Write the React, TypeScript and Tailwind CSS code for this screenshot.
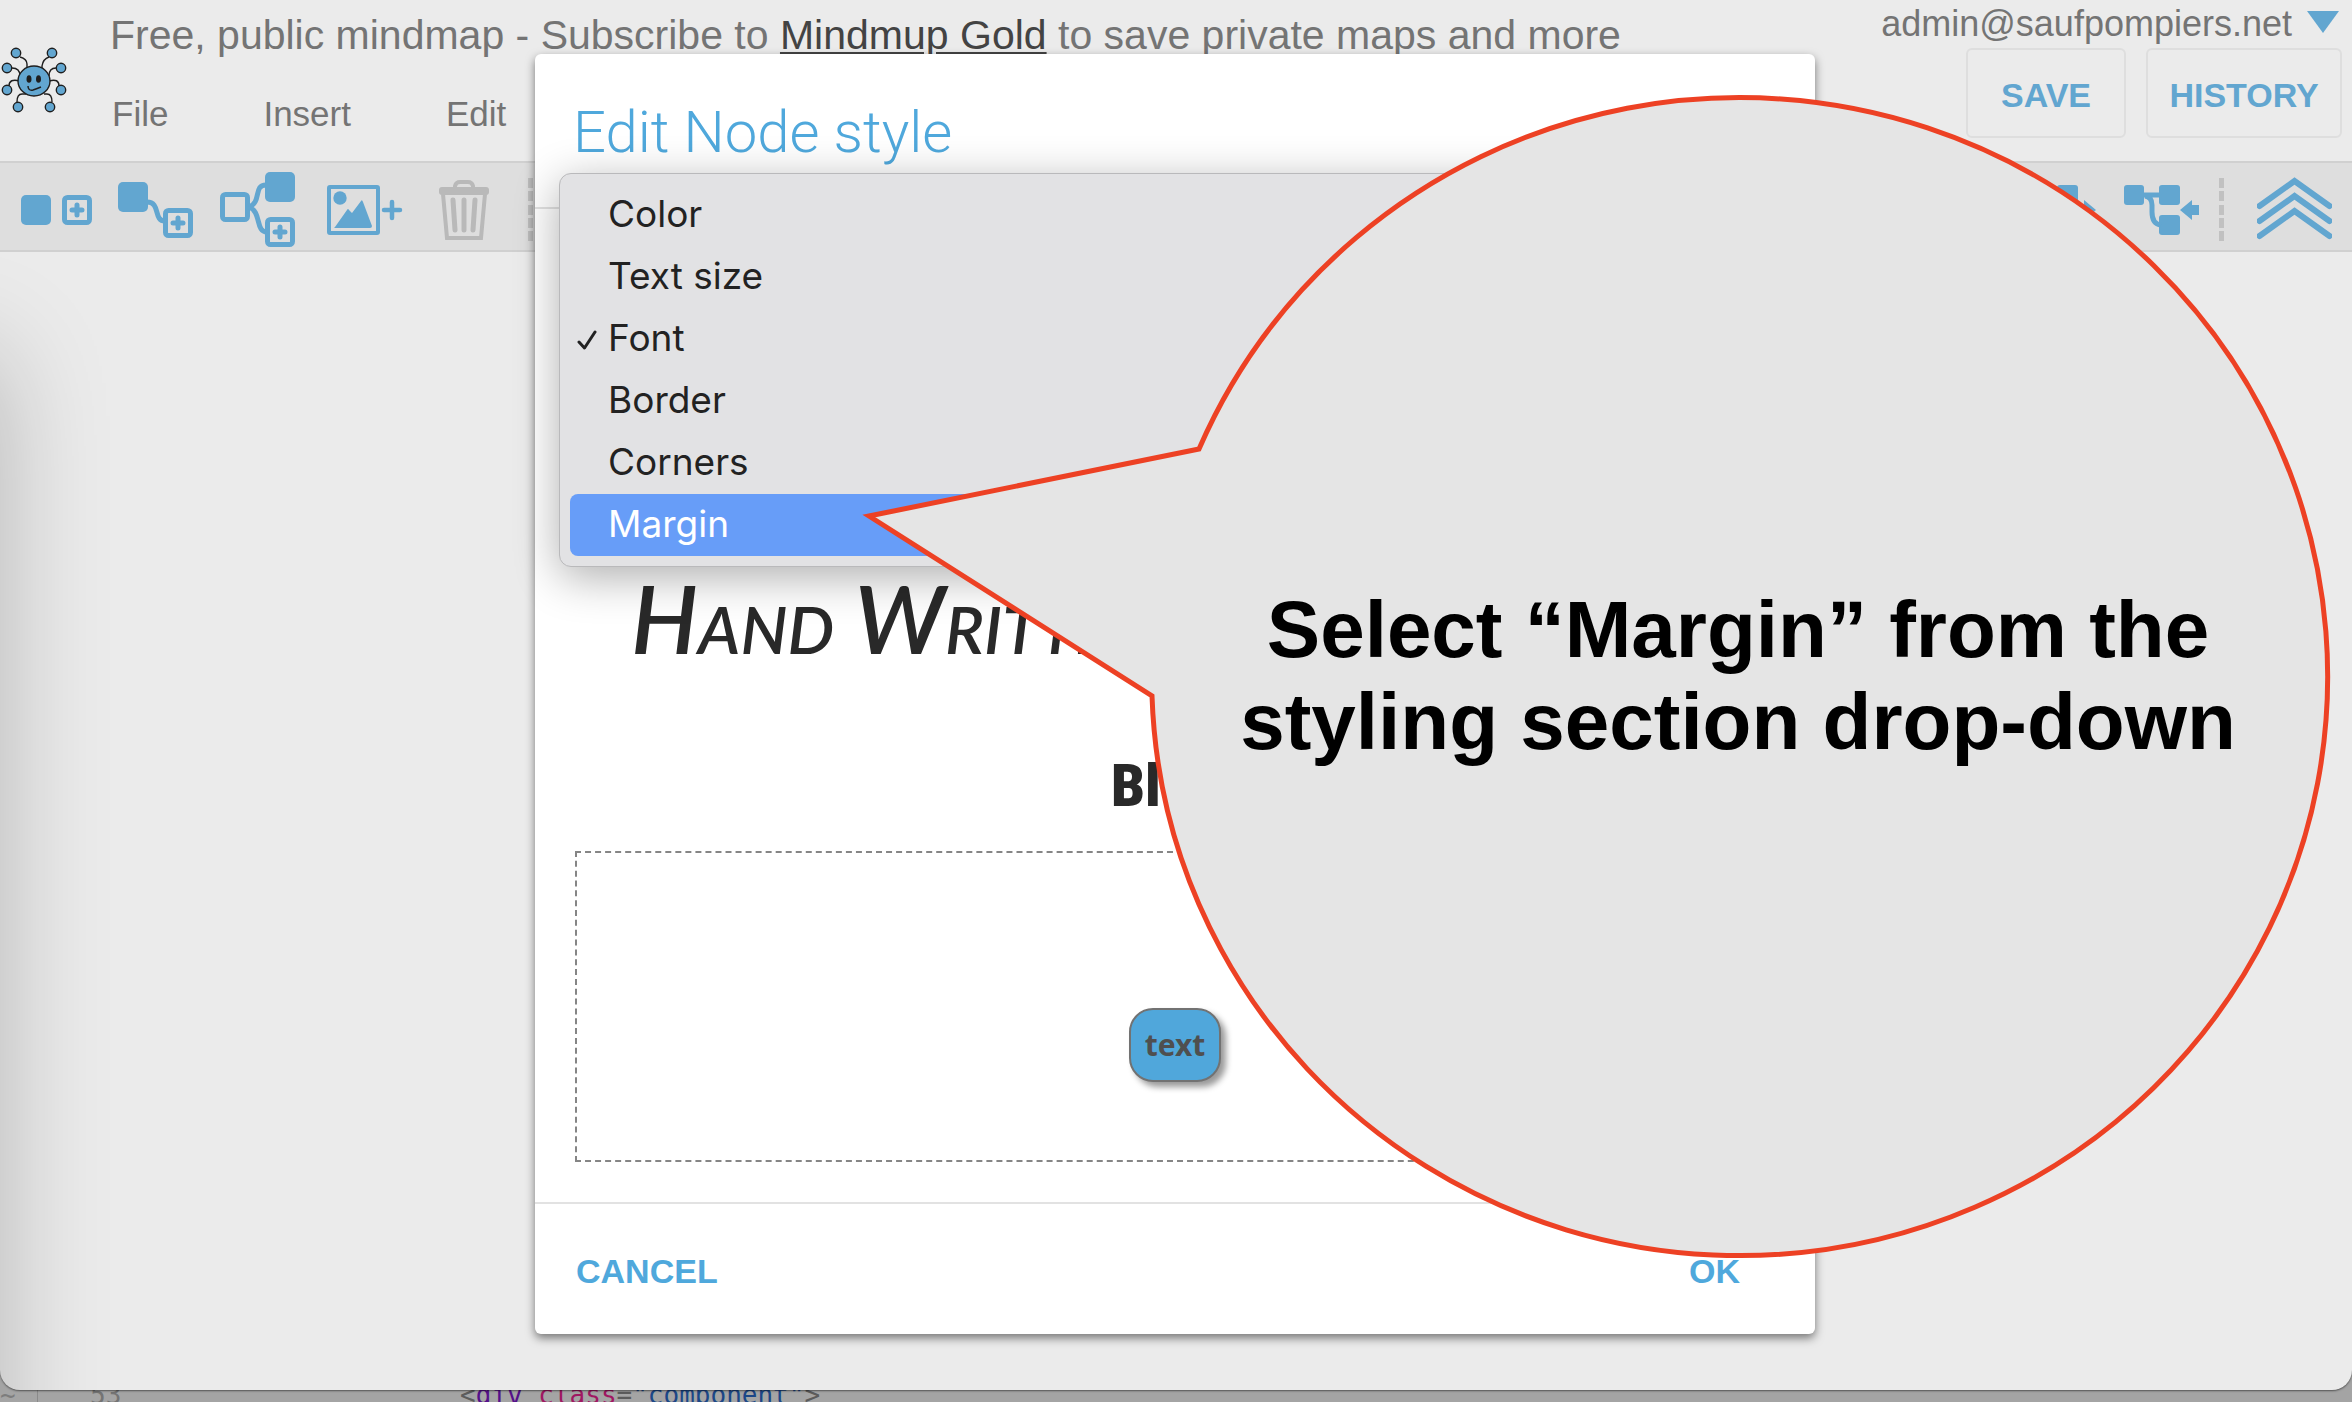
import type { ReactNode } from "react";

const BLUE = "#62a6d0";

function Logo() {
  const arms = [
    [15, 8, "M26 27 V19 Q26 14 19 12"],
    [51, 8, "M41 27 V21 Q42 14 48 12"],
    [6, 23, "M19 31 Q19 23 11 23"],
    [60, 23, "M48 31 Q48 23 55 23"],
    [6, 45, "M19 36 Q8 33 8 41"],
    [60, 45, "M48 36 Q58 33 58 41"],
    [17, 62, "M25 49 H21 Q16 49 16 57"],
    [49, 62, "M43 49 H46 Q51 49 51 57"],
  ] as const;
  return (
    <svg viewBox="0 0 66 68" className="w-[66px] h-[68px] shrink-0" role="img" aria-label="MindMup">
      {arms.map(([x, y, d]) => (
        <g key={d} stroke="#1f1f1f" strokeWidth="1.4">
          <path d={d} fill="none" />
          <circle cx={x} cy={y} r="4.7" fill={BLUE} />
        </g>
      ))}
      <ellipse cx="33" cy="36" rx="16" ry="15" fill={BLUE} stroke="#1f1f1f" strokeWidth="1.4" />
      <ellipse cx="28" cy="34" rx="2.5" ry="3.8" fill="#1f1f1f" />
      <ellipse cx="37.500" cy="34" rx="2.5" ry="3.8" fill="#1f1f1f" />
      <path d="M27 41 Q27 46 32 45 Q35 44 40 42" fill="none" stroke="#1f1f1f" strokeWidth="1.5" />
    </svg>
  );
}

function PlusBox({ x, y }: { x: number; y: number }) {
  return (
    <g>
      <rect x={x + 2.5} y={y + 2.5} width="25" height="25" rx="3" fill="none" stroke={BLUE} strokeWidth="5" />
      <path d={`M${x + 15} ${y + 10} v10 M${x + 10} ${y + 15} h10`} stroke={BLUE} strokeWidth="5" strokeLinecap="round" />
    </g>
  );
}

function Tool({ label, children }: { label: string; children: ReactNode }) {
  return (
    <button type="button" aria-label={label} className="block shrink-0">
      {children}
    </button>
  );
}

function Divider() {
  return (
    <svg viewBox="0 0 5 64" className="w-[5px] h-16 shrink-0" aria-hidden="true">
      {[0, 13, 27, 40, 53].map((y) => (
        <rect key={y} x="0" y={y} width="5" height="10" fill="#c1c1c1" />
      ))}
    </svg>
  );
}

function TreeIcon({ arrow }: { arrow: string }) {
  return (
    <svg viewBox="0 0 76 50" className="w-[76px] h-[50px]">
      <g fill={BLUE}>
        <rect x="0" y="0" width="20" height="20" rx="3" />
        <rect x="35" y="0" width="21" height="20" rx="3" />
        <rect x="35" y="30" width="21" height="20" rx="3" />
        <path d={arrow} />
      </g>
      <path d="M20 10 H36 M21 11 Q28 12 28 20 V27 Q28 39 37 40" fill="none" stroke={BLUE} strokeWidth="5" />
    </svg>
  );
}

function Header() {
  return (
    <header className="flex justify-between pl-px pr-[10px] h-[161px] text-[#747474]">
      <div className="flex">
        <div className="pt-[45px]">
          <Logo />
        </div>
        <div className="pl-[43px] pt-[11px]">
          <p className="text-[41px] leading-[48px] whitespace-nowrap">
            Free, public mindmap - Subscribe to{" "}
            <a href="#gold" className="text-[#434343] underline">
              Mindmup Gold
            </a>{" "}
            to save private maps and more
          </p>
          <nav className="mt-[35px] flex gap-[95px] pl-[2px] text-[35px] leading-[40px]">
            <button type="button">File</button>
            <button type="button">Insert</button>
            <button type="button">Edit</button>
          </nav>
        </div>
      </div>
      <div className="flex flex-col items-end">
        <button type="button" className="flex items-center gap-[15px] pr-[3px] pt-1 text-[36px] leading-[40px]">
          admin@saufpompiers.net
          <svg viewBox="0 0 32 22" className="mb-1 w-8 h-[22px]" aria-hidden="true">
            <path d="M0 0 H32 L16 22 Z" fill={BLUE} />
          </svg>
        </button>
        <div className="mt-1 flex gap-5 text-[34px] leading-[40px] font-bold text-[#62a6d0]">
          <button type="button" className="h-[90px] w-40 rounded-md border-2 border-[#dedede] pt-1">
            SAVE
          </button>
          <button type="button" className="h-[90px] w-[196px] rounded-md border-2 border-[#dedede] pt-1">
            HISTORY
          </button>
        </div>
      </div>
    </header>
  );
}

function Toolbar() {
  return (
    <div className="flex items-center justify-between border-y-2 border-[#d0d0d0] bg-[#dedede] h-[91px] pt-[7px] pl-[21px] pr-5">
      <div className="flex items-center">
        <Tool label="Add sibling">
          <svg viewBox="0 0 71 80" className="w-[71px] h-20">
            <rect x="0" y="25" width="30" height="30" rx="5" fill={BLUE} />
            <PlusBox x={41} y={25} />
          </svg>
        </Tool>
        <div className="pl-[26px]">
          <Tool label="Add child">
            <svg viewBox="0 0 75 80" className="w-[75px] h-20">
              <path d="M29 32 C43 32 35 51 47 51" fill="none" stroke={BLUE} strokeWidth="5" />
              <rect x="0" y="12" width="30" height="30" rx="5" fill={BLUE} />
              <PlusBox x={45} y={38} />
            </svg>
          </Tool>
        </div>
        <div className="pl-[27px]">
          <Tool label="Insert parent">
            <svg viewBox="0 0 76 80" className="w-[76px] h-20">
              <rect x="2.5" y="24.5" width="25" height="25" rx="3" fill="none" stroke={BLUE} strokeWidth="5" />
              <path d="M29 37 C42 32 33 15 46 15 M29 37 C42 42 35 62 47 62" fill="none" stroke={BLUE} strokeWidth="5" />
              <rect x="45" y="2" width="30" height="30" rx="5" fill={BLUE} />
              <PlusBox x={45} y={47} />
            </svg>
          </Tool>
        </div>
        <div className="pl-[31px]">
          <Tool label="Add image">
            <svg viewBox="0 0 76 80" className="w-[76px] h-20">
              <rect x="2" y="17" width="49" height="46" rx="1" fill="none" stroke={BLUE} strokeWidth="4" />
              <circle cx="13" cy="28" r="6.7" fill={BLUE} />
              <path d="M8 57 L20 40 Q21 38 22 40 L25 43 L34 31 Q35 29 36 32 L45 56 Q45 58 43 58 H9 Q6 58 8 57 Z" fill={BLUE} />
              <path d="M65 32 v16 M57 40 h16" stroke={BLUE} strokeWidth="4.5" strokeLinecap="round" />
            </svg>
          </Tool>
        </div>
        <div className="pl-9">
          <Tool label="Delete">
            <svg viewBox="0 0 50 80" className="w-[50px] h-20">
              <g fill="none" stroke="#b9b9b9" strokeWidth="4">
                <path d="M16 18 V16 Q17 12 21 12 H29 Q33 12 34 16 V18" />
                <path d="M4 24 L8 68 H42 L46 24" />
                <path d="M14 30 L16 60 M25 30 V60 M36 30 L34 60" strokeWidth="5" strokeLinecap="round" />
              </g>
              <rect x="0" y="17" width="50" height="8" rx="3" fill="#b9b9b9" />
            </svg>
          </Tool>
        </div>
        <div className="pl-[39px]">
          <Divider />
        </div>
      </div>
      <div className="flex items-center">
        <Tool label="Move right">
          <TreeIcon arrow="M56 20 H62 V15 L74 25 L62 35 V30 H56 Z" />
        </Tool>
        <div className="pl-[26px]">
          <Tool label="Move left">
            <TreeIcon arrow="M56 25 L68 15 V20 H75 V30 H68 V35 Z" />
          </Tool>
        </div>
        <div className="pl-[19px]">
          <Divider />
        </div>
        <div className="pl-[33px]">
          <Tool label="Collapse toolbar">
            <svg viewBox="0 0 75 66" className="w-[75px] h-[66px]">
              <path
                d="M2.500 29 L37.500 4 L72.500 29 M2.500 44 L37.500 19 L72.500 44 M2.500 59 L37.500 34 L72.500 59"
                fill="none"
                stroke={BLUE}
                strokeWidth="6"
                strokeLinecap="round"
              />
            </svg>
          </Tool>
        </div>
      </div>
    </div>
  );
}

const sections = ["Color", "Text size", "Font", "Border", "Corners", "Margin"];

function SectionMenu() {
  return (
    <div
      role="listbox"
      aria-label="Styling section"
      className="absolute left-6 right-6 top-[119px] rounded-xl border border-[#b9b9bb] bg-[#e2e2e4] px-[10px] py-[10px] shadow-[0_10px_45px_rgba(0,0,0,0.32)] font-[Inter,sans-serif] text-[37px] leading-[60px] text-[#222]"
    >
      {sections.map((name) => (
        <button
          key={name}
          type="button"
          role="option"
          aria-selected={name === "Font"}
          className={
            name === "Margin"
              ? "flex w-full items-center rounded-lg bg-[#679df8] pb-0.5 text-white"
              : "flex w-full items-center pb-0.5"
          }
        >
          <span className="flex w-[38px] shrink-0 justify-center pr-1">
            {name === "Font" && (
              <svg viewBox="0 0 20 20" className="mt-1 w-5 h-5" aria-hidden="true">
                <path d="M2 12 L7.500 18 L18 2" fill="none" stroke="#222" strokeWidth="3" strokeLinecap="round" strokeLinejoin="round" />
              </svg>
            )}
          </span>
          {name}
        </button>
      ))}
    </div>
  );
}

function StyleDialog() {
  return (
    <section
      role="dialog"
      aria-labelledby="dialog-title"
      className="relative flex h-full w-full max-w-[1280px] flex-col rounded-md bg-white shadow-[0_4px_10px_rgba(0,0,0,0.5)]"
    >
      <h1
        id="dialog-title"
        className="h-[155px] border-b-2 border-[#e2e2e2] px-[38px] pt-[42px] font-[Roboto,sans-serif] text-[58px] leading-[72px] font-light text-[#4fa8dc]"
      >
        Edit Node style
      </h1>
      <div className="flex grow flex-col justify-end px-10 pb-10 text-[#292929]">
        <p className="pl-[56px] font-[Lato,sans-serif] text-[94px] leading-[100px] font-semibold italic [font-variant-caps:small-caps]">
          Hand Written
        </p>
        <p className="mt-[78px] pl-[536px] font-['Roboto_Condensed',Roboto,sans-serif] text-[60px] leading-[80px] font-black">
          Block
        </p>
        <div className="mt-[25px] flex h-[311px] items-center justify-center border-2 border-dashed border-[#858585]">
          <div className="mt-[76px] flex h-[74px] w-[92px] items-center justify-center rounded-3xl border-2 border-[#727272] bg-[#50a7db] font-['Noto_Sans','Open_Sans',sans-serif] text-[30px] font-bold text-[#4f4f4f] shadow-[5px_5px_6px_rgba(0,0,0,0.4)]">
            text
          </div>
        </div>
      </div>
      <footer className="flex h-[132px] items-center justify-between border-t-2 border-[#e2e2e2] pt-1 pl-[41px] pr-[75px] text-[34px] leading-[40px] font-bold text-[#4fa8dc]">
        <button type="button">CANCEL</button>
        <button type="button">OK</button>
      </footer>
      <SectionMenu />
    </section>
  );
}

function Callout() {
  return (
    <aside className="absolute right-5 top-[94px] h-[1166px] w-[1470px]">
      <svg viewBox="862 94 1470 1166" className="absolute inset-0 h-full w-full" aria-hidden="true">
        <path
          d="M869 516 L1199 449 A588 579 0 1 1 1152 696 Z"
          fill="#e5e5e5"
          stroke="#ed4124"
          strokeWidth="5"
        />
      </svg>
      <p className="relative ml-[282px] flex h-[1166px] items-center justify-center pb-0.5 text-center text-[80px] leading-[92px] font-bold text-black">
        <span>
          Select “Margin” from the
          <br />
          styling section drop-down
        </span>
      </p>
    </aside>
  );
}

function EditorStrip() {
  return (
    <div className="flex h-3 items-end overflow-hidden font-['DejaVu_Sans_Mono',monospace] text-[26px] leading-[14px] text-[#5c5c5c] whitespace-pre">
      <span className="w-[38px] shrink-0 border-r border-[#8a8a8a] text-[#7d7d7d]">~</span>
      <span className="w-[422px] shrink-0 pl-[52px] text-[#747474]">53</span>
      <code className="font-['DejaVu_Sans_Mono',monospace]">
        &lt;<span className="text-[#55118a]">div</span> <span className="text-[#a01762]">class</span>=
        <span className="text-[#1c4787]">"component"</span>&gt;
      </code>
    </div>
  );
}

export default function App() {
  return (
    <div className="relative flex h-screen min-h-[1200px] flex-col overflow-hidden bg-[#a4a4a4] font-['Liberation_Sans',Arial,sans-serif]">
      <main className="relative grow overflow-hidden rounded-b-[20px] bg-[#ebebeb] shadow-[0_1px_2px_rgba(0,0,0,0.5)]">
        <Header />
        <Toolbar />
        <div className="absolute -left-52 top-[355px] -bottom-52 w-52 shadow-[0_0_110px_rgba(0,0,0,0.23)]" />
        <div className="absolute inset-x-0 top-[54px] bottom-14 flex justify-center pr-0.5">
          <StyleDialog />
        </div>
        <Callout />
      </main>
      <EditorStrip />
    </div>
  );
}
